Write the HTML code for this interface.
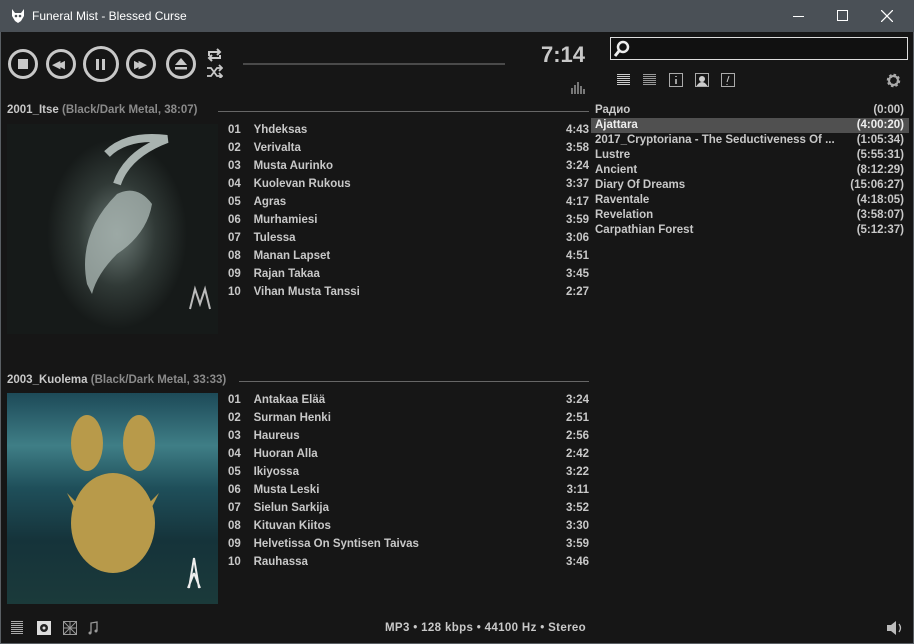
<!DOCTYPE html>
<html><head><meta charset="utf-8"><style>
*{margin:0;padding:0;box-sizing:border-box}
body{width:914px;height:644px;background:#161616;font-family:"Liberation Sans","DejaVu Sans",sans-serif;position:relative;overflow:hidden;color:#c8c8c8}
.a{position:absolute}
.tb{left:0;top:0;width:914px;height:32px;background:#4a5056;color:#fff;font-size:12px}
.win{left:0;top:32px;width:914px;height:612px;border:1px solid #5a5f64;border-top:none;background:#161616}
.btn{position:absolute;border:3px solid #c8c8c8;border-radius:50%}
.t{font-size:11.5px;font-weight:bold;color:#c8c8c8;white-space:nowrap}
.hdr{font-size:11.5px;font-weight:bold;color:#c8c8c8}
.hdr span{color:#8a8a8a}
.pl div{height:15px;line-height:15px;font-size:11.5px;font-weight:bold;padding:0 5px 0 4px;display:flex;justify-content:space-between;color:#c8c8c8}
</style></head><body>
<div class="a tb">
 <svg class="a" style="left:11px;top:8px" width="14" height="16" viewBox="0 0 14 16"><path d="M1 1 L4 5 H10 L13 1 L13 8 L10 13 L7 15 L4 13 L1 8Z" fill="#fff"/><circle cx="5" cy="8" r="1.3" fill="#4a5056"/><circle cx="9" cy="8" r="1.3" fill="#4a5056"/></svg>
 <div class="a" style="left:32px;top:9px">Funeral Mist - Blessed Curse</div>
 <div class="a" style="left:793px;top:16px;width:11px;height:1px;background:#fff"></div>
 <div class="a" style="left:837px;top:10px;width:11px;height:11px;border:1px solid #fff"></div>
 <svg class="a" style="left:881px;top:10px" width="12" height="12"><path d="M0 0L12 12M12 0L0 12" stroke="#fff" stroke-width="1.3"/></svg>
</div>
<div class="a win"></div>

<div class="btn" style="left:8px;top:49px;width:30px;height:30px"></div><div class="a" style="left:18px;top:59px;width:10px;height:10px;background:#c8c8c8"></div>
<div class="btn" style="left:46px;top:49px;width:30px;height:30px"></div><div class="a" style="left:52px;top:58px;font-size:11px;color:#c8c8c8;letter-spacing:-4px">◀◀</div>
<div class="btn" style="left:83px;top:46px;width:36px;height:36px"></div><div class="a" style="left:96px;top:59px;width:3px;height:11px;background:#c8c8c8"></div><div class="a" style="left:102px;top:59px;width:3px;height:11px;background:#c8c8c8"></div>
<div class="btn" style="left:126px;top:49px;width:30px;height:30px"></div><div class="a" style="left:134px;top:58px;font-size:11px;color:#c8c8c8;letter-spacing:-4px">▶▶</div>
<div class="btn" style="left:166px;top:49px;width:30px;height:30px"></div>
<svg class="a" style="left:174px;top:57px" width="14" height="14"><path d="M7 1L13 8H1Z" fill="#c8c8c8"/><rect x="1" y="10" width="12" height="2.5" fill="#c8c8c8"/></svg>
<svg class="a" style="left:206px;top:46px" width="17" height="32" fill="none" stroke="#c8c8c8" stroke-width="2"><path d="M3 10V6H13M11 3l3 3-3 3M14 9V12H4M6 15l-3-3 3-3"/><path d="M1 22h4l6 8h5M1 30h4l6-8h5M13 19l3 3-3 3M13 27l3 3-3 3" stroke-width="1.8"/></svg>
<div class="a" style="left:243px;top:63px;width:262px;height:2px;background:#4a4a4a"></div>
<div class="a" style="left:541px;top:42px;font-size:22px;font-weight:bold;color:#c8c8c8">7:14</div>
<svg class="a" style="left:570px;top:80px" width="16" height="14"><g fill="#777"><rect x="1" y="8" width="2" height="6"/><rect x="4" y="5" width="2" height="9"/><rect x="7" y="2" width="2" height="12"/><rect x="10" y="6" width="2" height="8"/><rect x="13" y="9" width="2" height="5"/></g></svg>

<div class="a hdr" style="left:7px;top:104px">2001_Itse <span>(Black/Dark Metal, 38:07)</span></div>
<div class="a" style="left:218px;top:111px;width:371px;height:1px;background:#666"></div>
<div class="a" style="left:7px;top:124px;width:211px;height:210px;background:radial-gradient(ellipse 70px 95px at 110px 110px,#6f7d79,#303936 55%,#161a19 100%)"></div>
<svg class="a" style="left:7px;top:124px" width="211" height="210"><path d="M45 20a12 12 0 1 0 5 25a10 10 0 1 1 -5 -25z" fill="#ddd"/><path d="M100 30 Q120 10 160 15 Q120 30 110 60" stroke="#a9b3b0" stroke-width="8" fill="none"/><path d="M80 160 Q70 110 110 70 Q130 60 145 80 Q140 110 110 130 Q90 150 85 170Z" fill="#a8b4b0" opacity=".8"/><path d="M183 185 L188 165 L193 180 L198 165 L203 185" stroke="#bbb" stroke-width="2" fill="none"/></svg>
<div class="a" style="left:228px;top:124px;width:361px">
 <div class="t" style="position:relative;height:18px">01&nbsp;&nbsp;&nbsp;&nbsp;Yhdeksas<span style="position:absolute;right:0">4:43</span></div>
 <div class="t" style="position:relative;height:18px">02&nbsp;&nbsp;&nbsp;&nbsp;Verivalta<span style="position:absolute;right:0">3:58</span></div>
 <div class="t" style="position:relative;height:18px">03&nbsp;&nbsp;&nbsp;&nbsp;Musta Aurinko<span style="position:absolute;right:0">3:24</span></div>
 <div class="t" style="position:relative;height:18px">04&nbsp;&nbsp;&nbsp;&nbsp;Kuolevan Rukous<span style="position:absolute;right:0">3:37</span></div>
 <div class="t" style="position:relative;height:18px">05&nbsp;&nbsp;&nbsp;&nbsp;Agras<span style="position:absolute;right:0">4:17</span></div>
 <div class="t" style="position:relative;height:18px">06&nbsp;&nbsp;&nbsp;&nbsp;Murhamiesi<span style="position:absolute;right:0">3:59</span></div>
 <div class="t" style="position:relative;height:18px">07&nbsp;&nbsp;&nbsp;&nbsp;Tulessa<span style="position:absolute;right:0">3:06</span></div>
 <div class="t" style="position:relative;height:18px">08&nbsp;&nbsp;&nbsp;&nbsp;Manan Lapset<span style="position:absolute;right:0">4:51</span></div>
 <div class="t" style="position:relative;height:18px">09&nbsp;&nbsp;&nbsp;&nbsp;Rajan Takaa<span style="position:absolute;right:0">3:45</span></div>
 <div class="t" style="position:relative;height:18px">10&nbsp;&nbsp;&nbsp;&nbsp;Vihan Musta Tanssi<span style="position:absolute;right:0">2:27</span></div>
</div>

<div class="a hdr" style="left:7px;top:374px">2003_Kuolema <span>(Black/Dark Metal, 33:33)</span></div>
<div class="a" style="left:239px;top:381px;width:350px;height:1px;background:#666"></div>
<div class="a" style="left:7px;top:393px;width:211px;height:211px;background:linear-gradient(180deg,#1d4a58 0%,#3f7e86 25%,#1f4f5a 45%,#15333a 70%,#1b3a3a 100%)"></div>
<svg class="a" style="left:7px;top:393px" width="211" height="211"><g fill="#b89a4a"><ellipse cx="80" cy="50" rx="16" ry="28"/><ellipse cx="132" cy="50" rx="16" ry="28"/><ellipse cx="106" cy="130" rx="42" ry="50"/><path d="M60 100l10 20 5-5zM152 100l-10 20-5-5z"/></g><path d="M182 195l5-30 5 30M187 180l-6 15M187 180l6 15" stroke="#eee" stroke-width="2" fill="none"/></svg>
<div class="a" style="left:228px;top:394px;width:361px">
 <div class="t" style="position:relative;height:18px">01&nbsp;&nbsp;&nbsp;&nbsp;Antakaa Elää<span style="position:absolute;right:0">3:24</span></div>
 <div class="t" style="position:relative;height:18px">02&nbsp;&nbsp;&nbsp;&nbsp;Surman Henki<span style="position:absolute;right:0">2:51</span></div>
 <div class="t" style="position:relative;height:18px">03&nbsp;&nbsp;&nbsp;&nbsp;Haureus<span style="position:absolute;right:0">2:56</span></div>
 <div class="t" style="position:relative;height:18px">04&nbsp;&nbsp;&nbsp;&nbsp;Huoran Alla<span style="position:absolute;right:0">2:42</span></div>
 <div class="t" style="position:relative;height:18px">05&nbsp;&nbsp;&nbsp;&nbsp;Ikiyossa<span style="position:absolute;right:0">3:22</span></div>
 <div class="t" style="position:relative;height:18px">06&nbsp;&nbsp;&nbsp;&nbsp;Musta Leski<span style="position:absolute;right:0">3:11</span></div>
 <div class="t" style="position:relative;height:18px">07&nbsp;&nbsp;&nbsp;&nbsp;Sielun Sarkija<span style="position:absolute;right:0">3:52</span></div>
 <div class="t" style="position:relative;height:18px">08&nbsp;&nbsp;&nbsp;&nbsp;Kituvan Kiitos<span style="position:absolute;right:0">3:30</span></div>
 <div class="t" style="position:relative;height:18px">09&nbsp;&nbsp;&nbsp;&nbsp;Helvetissa On Syntisen Taivas<span style="position:absolute;right:0">3:59</span></div>
 <div class="t" style="position:relative;height:18px">10&nbsp;&nbsp;&nbsp;&nbsp;Rauhassa<span style="position:absolute;right:0">3:46</span></div>
</div>

<div class="a" style="left:610px;top:37px;width:298px;height:23px;border:1px solid #ddd;background:#111"></div>
<svg class="a" style="left:613px;top:40px" width="18" height="18"><circle cx="10" cy="7" r="5" stroke="#eee" stroke-width="2.5" fill="none"/><path d="M6 11L2 16" stroke="#eee" stroke-width="3"/></svg>
<svg class="a" style="left:616px;top:73px" width="122" height="14" fill="none" stroke="#ccc">
 <g stroke-width="1"><path d="M1 1.5h13M1 3.5h13M1 5.5h13M1 7.5h13M1 9.5h13M1 11.5h13"/></g>
 <g stroke="#999"><path d="M27 1.5h13M27 3.5h13M27 5.5h13M27 7.5h13M27 9.5h13M27 11.5h13"/></g>
 <rect x="53.5" y=".5" width="13" height="13" stroke="#aaa"/><path d="M60 3v1M60 6v5" stroke="#ccc" stroke-width="1.5"/>
 <rect x="79.5" y=".5" width="13" height="13" stroke="#aaa"/><circle cx="86" cy="6" r="3" fill="#ccc" stroke="none"/><path d="M81 13q5-7 10 0" fill="#ccc"/>
 <rect x="105.5" y=".5" width="13" height="13" stroke="#aaa"/><path d="M113 3l-2 6M111 11v1" stroke="#ccc"/>
</svg>
<svg class="a" style="left:886px;top:73px" width="15" height="15"><circle cx="7.5" cy="7.5" r="5" fill="none" stroke="#aaa" stroke-width="3.5" stroke-dasharray="2.2 1.7"/><circle cx="7.5" cy="7.5" r="4.5" fill="none" stroke="#aaa" stroke-width="2"/></svg>
<div class="a pl" style="left:591px;top:103px;width:318px">
 <div><span>Радио</span><span>(0:00)</span></div>
 <div style="background:#505050;color:#eee"><span>Ajattara</span><span>(4:00:20)</span></div>
 <div><span>2017_Cryptoriana - The Seductiveness Of ...</span><span>(1:05:34)</span></div>
 <div><span>Lustre</span><span>(5:55:31)</span></div>
 <div><span>Ancient</span><span>(8:12:29)</span></div>
 <div><span>Diary Of Dreams</span><span>(15:06:27)</span></div>
 <div><span>Raventale</span><span>(4:18:05)</span></div>
 <div><span>Revelation</span><span>(3:58:07)</span></div>
 <div><span>Carpathian Forest</span><span>(5:12:37)</span></div>
</div>

<svg class="a" style="left:10px;top:620px" width="95" height="16">
 <path d="M1 1.5h12M1 3.5h12M1 5.5h12M1 7.5h12M1 9.5h12M1 11.5h12M1 13.5h12" stroke="#aaa"/>
 <rect x="27" y="1" width="14" height="14" fill="#ddd"/><circle cx="34" cy="8" r="4" fill="#222"/><circle cx="34" cy="8" r="1.5" fill="#ddd"/>
 <rect x="53.5" y="1.5" width="13" height="13" fill="none" stroke="#999"/><path d="M54 2l12 12M66 2L54 14M60 2v12M54 8h12" stroke="#999"/>
 <path d="M81 13V3l6-1v9" stroke="#999" fill="none" stroke-width="1.3"/><circle cx="80" cy="13" r="1.5" fill="#999"/><circle cx="86" cy="11" r="1.5" fill="#999"/>
</svg>
<div class="a" style="left:385px;top:622px;font-size:11.5px;font-weight:bold;color:#c8c8c8;letter-spacing:0.35px">MP3 • 128 kbps • 44100 Hz • Stereo</div>
<svg class="a" style="left:886px;top:620px" width="18" height="16"><path d="M1 5h4l5-4v14l-5-4H1Z" fill="#bbb"/><path d="M13 4q3 4 0 8" stroke="#bbb" fill="none" stroke-width="1.3"/></svg>
</body></html>
